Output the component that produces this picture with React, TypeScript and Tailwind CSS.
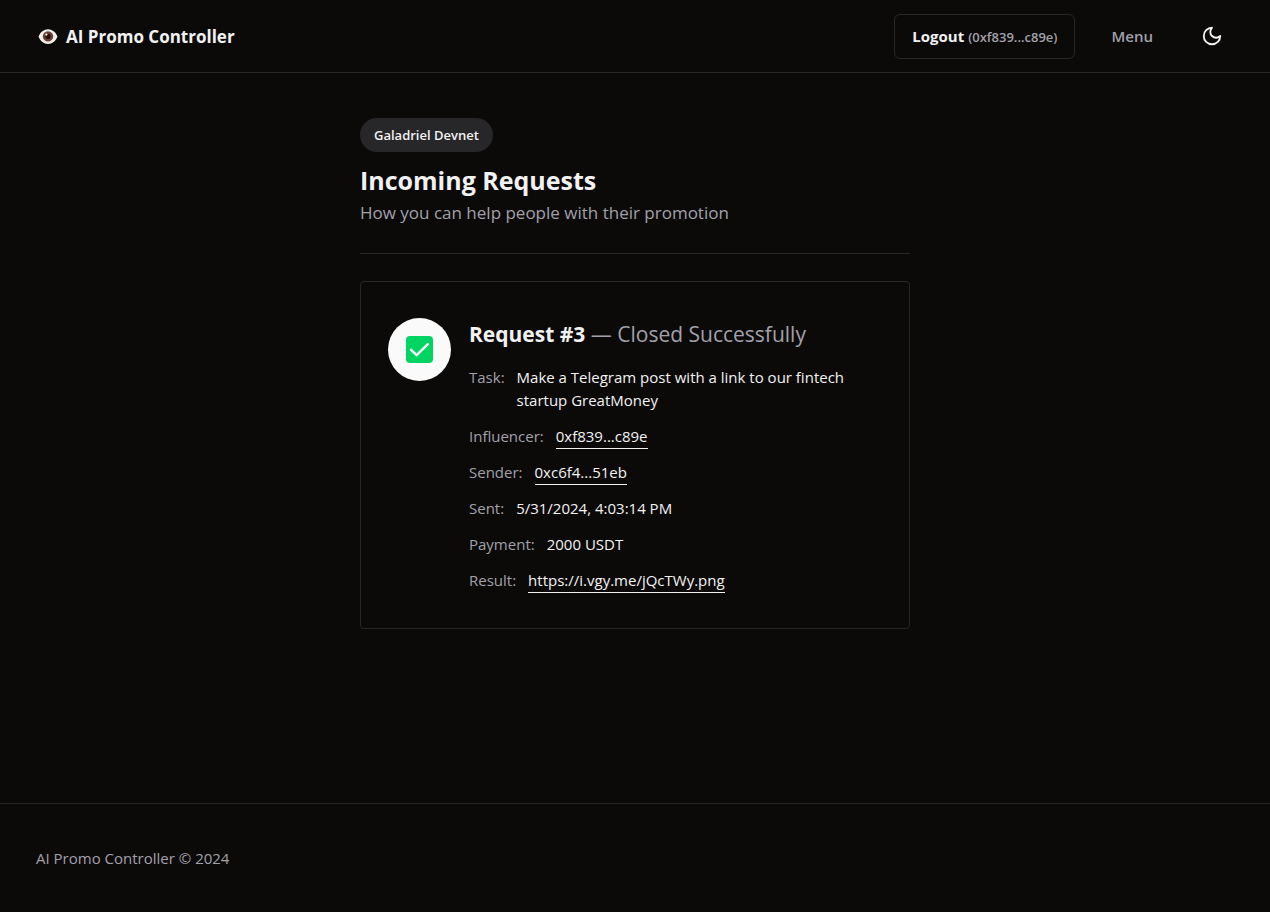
import React from 'react'

const EyeLogo: React.FC = () => (
  <svg viewBox="0 0 24 20" className="w-6 h-5" aria-hidden="true">
    <path d="M2.6 9.6C4.2 5 8 2.2 12 2.2S19.8 5 21.4 9.6C19.8 14.4 16 17 12 17S4.2 14.4 2.6 9.6Z" fill="#f3efec" />
    <circle cx="12" cy="9.4" r="5.2" fill="#6d4037" />
    <circle cx="12" cy="9.4" r="2.6" fill="#21100c" />
    <circle cx="10.4" cy="7.6" r="1.1" fill="#ffffff" />
  </svg>
)

const MoonIcon: React.FC = () => (
  <svg
    viewBox="0 0 24 24"
    className="w-[22px] h-[22px]"
    fill="none"
    stroke="currentColor"
    strokeWidth="2"
    strokeLinecap="round"
    strokeLinejoin="round"
    aria-hidden="true"
  >
    <path d="M12 3a6 6 0 0 0 9 9 9 9 0 1 1-9-9Z" />
  </svg>
)

const CheckIcon: React.FC = () => (
  <svg viewBox="0 0 27 27" className="w-[27px] h-[27px]" aria-hidden="true">
    <rect width="27" height="27" rx="4" fill="#00d563" />
    <path d="M5 13.8 10.6 19.2 21.8 8.2" fill="none" stroke="#fafafa" strokeWidth="2.4" strokeLinecap="round" strokeLinejoin="round" />
  </svg>
)

interface Detail {
  label: string
  value: string
  href?: string
}

const details: Detail[] = [
  { label: 'Task:', value: 'Make a Telegram post with a link to our fintech startup GreatMoney' },
  { label: 'Influencer:', value: '0xf839...c89e', href: '#influencer' },
  { label: 'Sender:', value: '0xc6f4...51eb', href: '#sender' },
  { label: 'Sent:', value: '5/31/2024, 4:03:14 PM' },
  { label: 'Payment:', value: '2000 USDT' },
  { label: 'Result:', value: 'https://i.vgy.me/jQcTWy.png', href: 'https://i.vgy.me/jQcTWy.png' },
]

const Header: React.FC = () => (
  <header className="border-b border-[#27272a]">
    <div className="flex items-center justify-between h-[72px] px-9">
      <a href="#home" className="flex items-center gap-1.5 pt-0.5">
        <EyeLogo />
        <span className="text-[17px] font-bold">AI Promo Controller</span>
      </a>
      <nav className="flex items-center">
        <button className="h-[45px] px-[17px] border border-[#27272a] rounded-md text-[15px] font-bold">
          Logout <span className="text-[13px] font-semibold text-[#a1a1aa]">(0xf839...c89e)</span>
        </button>
        <button className="h-[45px] px-9 text-[15px] font-semibold text-[#a1a1aa]">Menu</button>
        <button aria-label="Toggle theme" className="flex items-center justify-center w-[45px] h-[45px]">
          <MoonIcon />
        </button>
      </nav>
    </div>
  </header>
)

const RequestCard: React.FC = () => (
  <article className="flex gap-[18px] border border-[#27272a] rounded px-[27px] py-9">
    <div className="flex items-center justify-center w-[63px] h-[63px] shrink-0 rounded-full bg-[#fafafa]">
      <CheckIcon />
    </div>
    <div className="flex-1 min-w-0">
      <h2 className="text-[21px] leading-8 font-bold">
        Request #3 <span className="font-normal text-[#a1a1aa]">— Closed Successfully</span>
      </h2>
      <dl className="mt-4 space-y-[13px] text-[15px] leading-[23px]">
        {details.map((item) => (
          <div key={item.label} className="flex gap-3">
            <dt className="text-[#a1a1aa]">{item.label}</dt>
            <dd className="min-w-0">
              {item.href ? (
                <a href={item.href} className="block border-b border-[#f2f2f2] -mb-px">
                  {item.value}
                </a>
              ) : (
                item.value
              )}
            </dd>
          </div>
        ))}
      </dl>
    </div>
  </article>
)

const App: React.FC = () => {
  return (
    <div className="flex flex-col min-h-screen bg-[#0c0a09] text-[#f2f2f2] font-['Open_Sans','Noto_Sans',sans-serif]">
      <Header />

      <main className="flex-1 w-full max-w-[550px] mx-auto pt-[45px] pb-9">
        <span className="inline-flex items-center h-[34px] px-3.5 pt-0.5 rounded-full bg-[#27272a] text-[13px] font-semibold">
          Galadriel Devnet
        </span>
        <h1 className="mt-2 text-[25px] leading-10 font-bold">Incoming Requests</h1>
        <p className="text-[17px] leading-[26px] text-[#a1a1aa]">How you can help people with their promotion</p>
        <hr className="my-[27px] border-[#27272a]" />
        <RequestCard />
      </main>

      <footer className="border-t border-[#27272a] px-9 py-9">
        <p className="text-[15px] leading-9 text-[#a1a1aa]">AI Promo Controller © 2024</p>
      </footer>
    </div>
  )
}

export default App
